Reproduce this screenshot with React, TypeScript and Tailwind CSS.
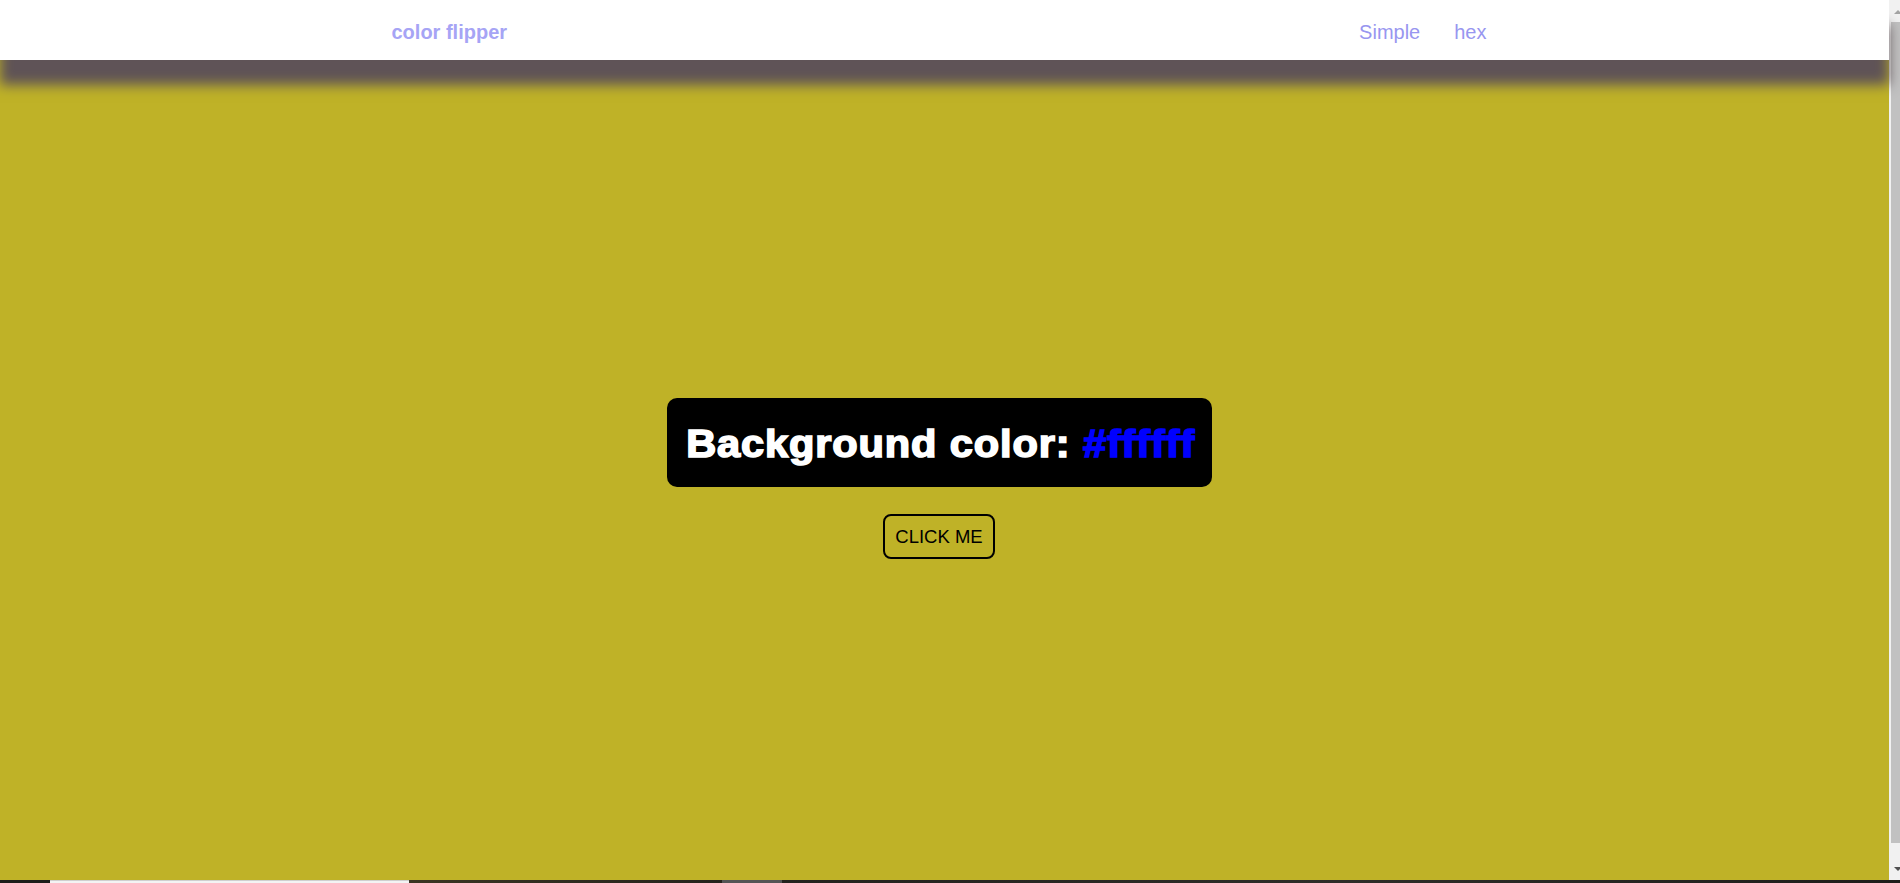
import React from "react";

export default function App() {
  return (
    <div
      className="w-[1900px] h-[883px] overflow-hidden flex flex-col bg-[#1d1c19]"
      style={{ fontFamily: '"Liberation Sans", Arial, sans-serif' }}
    >
      <div className="flex flex-row h-[880px]">
        {/* page content */}
        <div className="w-[1889px] h-full flex flex-col bg-[#bfb227]">
          <nav className="relative z-10 h-[60px] shrink-0 bg-white pr-[11px] shadow-[0_25px_12px_#5f5357]">
            <div className="w-[1095px] h-full mx-auto flex items-center justify-between pt-[4px]">
              <span className="text-[20px] font-bold text-[#a6a4f5]">color flipper</span>
              <div className="flex items-center gap-[34px] text-[20px] text-[#9896f0]">
                <span>Simple</span>
                <span>hex</span>
              </div>
            </div>
          </nav>
          <main className="flex-1 flex flex-col items-center pt-[338px] pr-[11px]">
            <div className="w-[545px] h-[89px] rounded-[10px] bg-black flex items-center justify-center pl-[3px] pt-[3px]">
              <h2 className="text-[38.5px] font-bold text-white leading-none whitespace-nowrap tracking-[0.8px] scale-x-[1.08] [-webkit-text-stroke:1.6px_white]">
                Background color:{" "}
                <span className="text-[#0000ff] [-webkit-text-stroke:1.6px_#0000ff]">#ffffff</span>
              </h2>
            </div>
            <button className="mt-[27px] w-[112px] h-[45px] border-2 border-black rounded-[8px] text-[18.5px] text-black bg-transparent flex items-center justify-center">
              CLICK ME
            </button>
          </main>
        </div>
        {/* scrollbar */}
        <div className="w-[11px] h-full bg-[#f1f1f1] flex flex-col">
          <div className="h-[22px] flex items-start pt-[10px] pl-[5px]">
            <div className="w-0 h-0 border-l-[4px] border-r-[4px] border-b-[4px] border-l-transparent border-r-transparent border-b-[#a3a3a3]" />
          </div>
          <div className="ml-[2px] h-[821px] bg-[#c1c1c1]" />
          <div className="flex-1 flex items-start pt-[24px] pl-[5px]">
            <div className="w-0 h-0 border-l-[4px] border-r-[4px] border-t-[4px] border-l-transparent border-r-transparent border-t-[#505050]" />
          </div>
        </div>
      </div>
      {/* bottom strip */}
      <div className="h-[3px] flex flex-row">
        <div className="w-[50px] bg-[#1d1c19]" />
        <div className="w-[359px] bg-[#f3f3f3] border-t border-[#cfcfcf]" />
        <div className="w-[313px] bg-gradient-to-r from-[#3b3522] to-[#25231c]" />
        <div className="w-[60px] bg-[#555555]" />
        <div className="flex-1 bg-gradient-to-r from-[#23221d] via-[#2e2d28] to-[#1e1d1a]" />
      </div>
    </div>
  );
}
